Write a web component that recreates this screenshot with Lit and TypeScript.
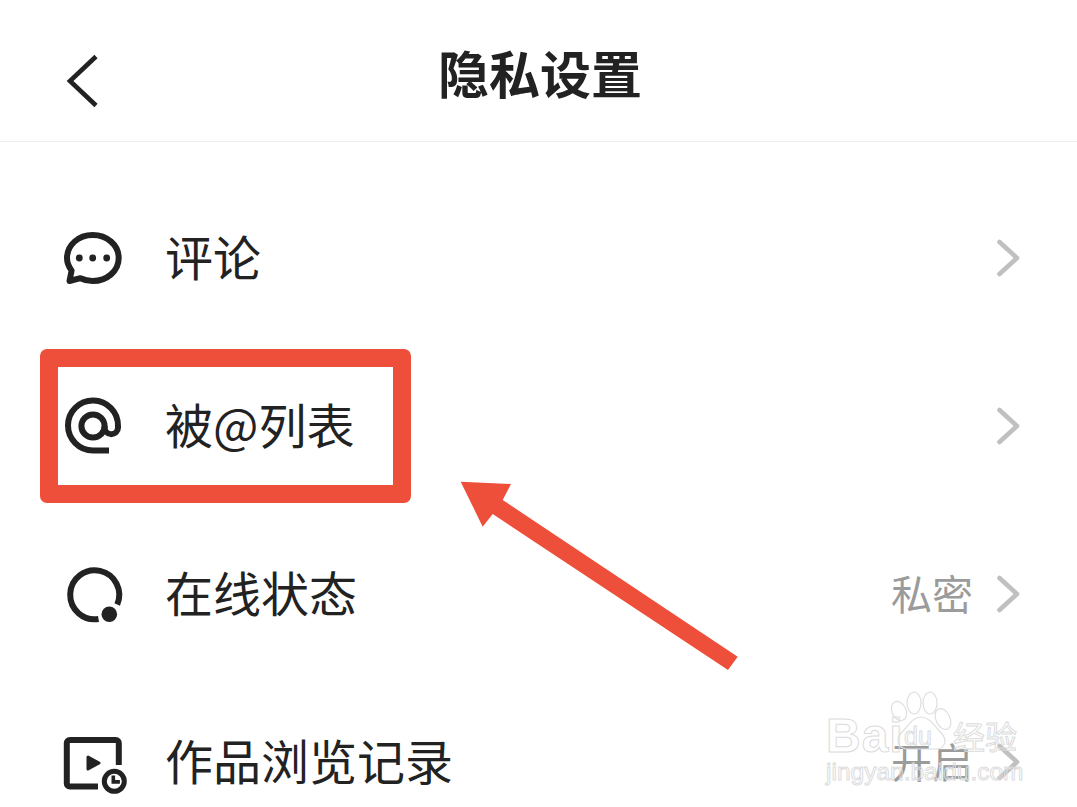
import { LitElement, html, css, svg } from "lit";
import { customElement } from "lit/decorators.js";

const chat = svg`<path class="s" d="M6.5 53 L8.6 42.5 C5.6 38.6 4 34.6 4 30 C4 17 15.5 7 29.7 7 C44 7 55.7 17 55.7 30 C55.7 43 44 53 29.7 53 C25.4 53 21 52 17.4 50.2 Z"/>
<circle class="f" cx="16.3" cy="30" r="3.4"/><circle class="f" cx="29.7" cy="30" r="3.4"/><circle class="f" cx="43.7" cy="30" r="3.4"/>`;
const at = svg`<path class="s" d="M46 54.5H30A25 25 0 1 1 55 30v1.5a6.7 6.7 0 0 1-13.4 0V30"/><circle class="s" cx="30" cy="30" r="11.6"/>`;
const online = svg`<path class="s" d="M54.2 40.5A24.5 24.5 0 1 0 35.5 55"/><circle class="f" cx="46.3" cy="50.3" r="7.8"/>`;
const video = svg`<path class="s" d="M55.8 33V11a3 3 0 0 0-3-3H6.8a3 3 0 0 0-3 3V51.5a3 3 0 0 0 3 3H35"/>
<path class="f tri" d="M25 25L36 31L25 37Z"/><circle class="s thin" cx="51.3" cy="49.3" r="10"/><path class="f" d="M48.5 43.5h3.6v4.6h4.8v3.6h-8.4Z"/>`;

const rows = [
  { icon: chat, label: "评论", value: "" },
  { icon: at, label: "被@列表", value: "" },
  { icon: online, label: "在线状态", value: "私密" },
  { icon: video, label: "作品浏览记录", value: "开启" },
];

@customElement("app-root")
export class AppRoot extends LitElement {
  static styles = css`
    :host {
      display: block;
      position: relative;
      width: 1077px;
      height: 807px;
      overflow: hidden;
      background: #fff;
      color: #222;
      font-family: "Noto Sans CJK SC", "Noto Sans", sans-serif;
    }
    .head {
      height: 141px;
      border-bottom: 1px solid #ececec;
      display: flex;
      align-items: center;
      justify-content: center;
      position: relative;
    }
    .back {
      position: absolute;
      left: 63px;
      top: 50px;
    }
    .back path {
      fill: none;
      stroke: #222;
      stroke-width: 4.6;
    }
    h1 {
      margin: 0;
      font-size: 51px;
      font-weight: 700;
      line-height: 60px;
      padding: 2px 0 0 3px;
    }
    .list {
      padding-top: 32px;
    }
    .row {
      height: 168px;
      display: flex;
      align-items: center;
      padding: 0 57px 0 63px;
    }
    .icon {
      width: 66px;
      height: 60px;
      margin-right: 36px;
      overflow: visible;
      flex: none;
    }
    .s {
      fill: none;
      stroke: #222;
      stroke-width: 6;
      stroke-linejoin: round;
    }
    .thin {
      stroke-width: 5;
    }
    .f {
      fill: #222;
    }
    .tri {
      stroke: #222;
      stroke-width: 3;
      stroke-linejoin: round;
    }
    .label {
      font-size: 48px;
      line-height: 60px;
      padding-bottom: 7px;
      flex: 1;
    }
    .value {
      font-size: 41px;
      line-height: 60px;
      padding-bottom: 5px;
      color: #9b9b9b;
      margin-right: 23px;
    }
    .chev {
      width: 24px;
      height: 40px;
      flex: none;
    }
    .chev path {
      fill: none;
      stroke: #c0c0c0;
      stroke-width: 4.6;
      stroke-linecap: round;
      stroke-linejoin: round;
    }
    .overlay {
      position: absolute;
      left: 0;
      top: 0;
      pointer-events: none;
    }
    .box {
      position: absolute;
      left: 40px;
      top: 349px;
      width: 371px;
      height: 154px;
      box-sizing: border-box;
      border: 18px solid #ee4f3b;
      border-radius: 7px;
    }
    .wm {
      position: absolute;
      color: transparent;
      -webkit-text-stroke: 1px #dcdcdc;
      white-space: nowrap;
      font-family: "Liberation Sans", sans-serif;
    }
    .bai {
      left: 826px;
      top: 713px;
      font-size: 48px;
      line-height: 46px;
      font-weight: 700;
      letter-spacing: 1px;
    }
    .du {
      left: 904px;
      top: 724px;
      font-size: 25px;
      line-height: 25px;
    }
    .jy {
      left: 953px;
      top: 717px;
      font-size: 32px;
      line-height: 36px;
      font-family: "Noto Sans CJK SC", sans-serif;
    }
    .url {
      left: 826px;
      top: 757px;
      font-size: 24.5px;
      line-height: 30px;
    }
  `;

  render() {
    return html`
      <div class="head">
        <svg class="back" width="40" height="60" viewBox="0 0 40 60"><path d="M33 6.5L7 31L33 55.5"/></svg>
        <h1>隐私设置</h1>
      </div>
      <div class="list">
        ${rows.map(
          (r) => html`<div class="row">
            <svg class="icon" viewBox="0 0 66 60">${r.icon}</svg>
            <span class="label">${r.label}</span>
            ${r.value ? html`<span class="value">${r.value}</span>` : ""}
            <svg class="chev" viewBox="0 0 24 40"><path d="M3.5 4L21 20L3.5 36"/></svg>
          </div>`
        )}
      </div>
      <div class="box"></div>
      <svg class="overlay" width="1077" height="807" viewBox="0 0 1077 807">
        <path fill="#ee4f3b" d="M460.7 481.7L511 484L502.7 500L737.7 656.7L728 670L492.7 514L482.7 526.7Z"/>
        <g fill="none" stroke="#dedede" stroke-width="1.2">
          <ellipse cx="899" cy="711" rx="7" ry="10" transform="rotate(-25 899 711)"/>
          <ellipse cx="914" cy="703" rx="7" ry="11"/>
          <ellipse cx="930" cy="703" rx="7" ry="11"/>
          <ellipse cx="943" cy="719" rx="7" ry="11" transform="rotate(-25 943 719)"/>
          <path d="M921 717C912 717 908 727 901 733C894 741 900 749 908 749H936C944 749 948 741 942 734C935 727 930 717 921 717Z"/>
        </g>
      </svg>
      <span class="wm bai">Bai</span>
      <span class="wm du">du</span>
      <span class="wm jy">经验</span>
      <span class="wm url">jingyan.baidu.com</span>
    `;
  }
}
